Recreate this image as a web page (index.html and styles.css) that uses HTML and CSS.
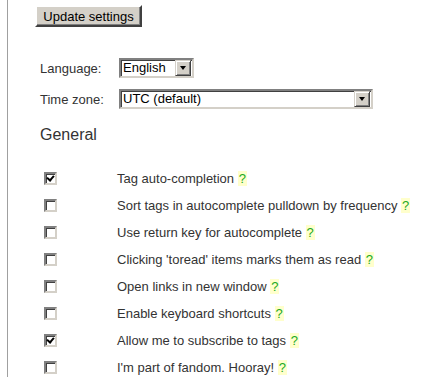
FILE: index.html
```html
<!DOCTYPE html>
<html>
<head>
<meta charset="utf-8">
<link rel="stylesheet" href="styles.css">
</head>
<body>
<div class="page">
  <div class="content">
    <button class="btn">Update settings</button>
    <div class="fields">
      <div class="field">
        <span class="lbl">Language:</span>
        <div class="select lang"><span class="val">English</span><span class="arrow"></span></div>
      </div>
      <div class="field">
        <span class="lbl">Time zone:</span>
        <div class="select tz"><span class="val">UTC (default)</span><span class="arrow"></span></div>
      </div>
    </div>
    <h2 class="section">General</h2>
    <ul class="opts">
      <li><span class="cb checked"></span><span class="text">Tag auto-completion <span class="help">?</span></span></li>
      <li><span class="cb"></span><span class="text">Sort tags in autocomplete pulldown by frequency <span class="help">?</span></span></li>
      <li><span class="cb"></span><span class="text">Use return key for autocomplete <span class="help">?</span></span></li>
      <li><span class="cb"></span><span class="text">Clicking 'toread' items marks them as read <span class="help">?</span></span></li>
      <li><span class="cb"></span><span class="text">Open links in new window <span class="help">?</span></span></li>
      <li><span class="cb"></span><span class="text">Enable keyboard shortcuts <span class="help">?</span></span></li>
      <li><span class="cb checked"></span><span class="text">Allow me to subscribe to tags <span class="help">?</span></span></li>
      <li><span class="cb"></span><span class="text">I'm part of fandom. Hooray! <span class="help">?</span></span></li>
    </ul>
  </div>
</div>
</body>
</html>
```

FILE: styles.css
```css
html, body {
  margin: 0;
  padding: 0;
  background: #fff;
  height: 100%;
  overflow: hidden;
}
body {
  font-family: "Liberation Sans", Arial, sans-serif;
  font-size: 13px;
  color: #333;
}
.page {
  margin-left: 7px;
  border-left: 1px solid #a0a0a0;
  min-height: 100%;
}
.content {
  padding: 5px 0 0 27px;
}
.btn {
  display: block;
  font-family: "Liberation Sans", Arial, sans-serif;
  font-size: 13px;
  color: #000;
  background: #d4d0c8;
  height: 22px;
  width: 107px;
  padding: 0;
  margin: 0;
  border: 2px solid;
  border-color: #fff #404040 #404040 #fff;
  box-shadow: inset -1px -1px 0 #808080, inset 1px 1px 0 #d4d0c8;
}
.fields {
  margin-top: 31px;
  display: flex;
  flex-direction: column;
  gap: 11px;
  padding-left: 5px;
}
.field {
  display: flex;
  align-items: center;
  height: 20px;
}
.lbl {
  width: 79px;
}
.select {
  display: flex;
  align-items: center;
  height: 20px;
  box-sizing: border-box;
  border: 2px solid;
  border-color: #808080 #d4d0c8 #d4d0c8 #808080;
  box-shadow: inset 1px 1px 0 #404040, inset -1px -1px 0 #fff;
  background: #fff;
  color: #000;
  padding: 0 1px 0 2px;
}
.select.lang { width: 75px; }
.select.tz { width: 254px; }
.val {
  flex: 1;
  line-height: 14px;
}
.arrow {
  width: 16px;
  height: 16px;
  box-sizing: border-box;
  background: #d4d0c8;
  border: 1px solid;
  border-color: #d4d0c8 #404040 #404040 #d4d0c8;
  box-shadow: inset 1px 1px 0 #fff, inset -1px -1px 0 #808080;
  position: relative;
}
.arrow::after {
  content: "";
  position: absolute;
  left: 4px;
  top: 5px;
  border-left: 3.5px solid transparent;
  border-right: 3.5px solid transparent;
  border-top: 4px solid #000;
}
.section {
  font-size: 16px;
  font-weight: normal;
  color: #333;
  margin: 16px 0 0 5px;
  line-height: 19px;
}
.opts {
  list-style: none;
  margin: 21px 0 0 0;
  padding: 0;
}
.opts li {
  display: flex;
  align-items: center;
  height: 27px;
}
.cb {
  width: 13px;
  height: 13px;
  box-sizing: border-box;
  margin-left: 9px;
  margin-right: 60px;
  border: 2px solid;
  border-color: #808080 #d4d0c8 #d4d0c8 #808080;
  box-shadow: inset 1px 1px 0 #404040, inset -1px -1px 0 #fff;
  background: #fff;
  position: relative;
}
.cb.checked::after {
  content: "";
  position: absolute;
  left: 2px;
  top: 0px;
  width: 3px;
  height: 5px;
  border: solid #000;
  border-width: 0 2px 2px 0;
  transform: rotate(40deg);
}
.text {
  white-space: nowrap;
}
.help {
  display: inline-block;
  background: #ffffcc;
  color: #22aa22;
  padding: 0 1px;
  line-height: 15px;
}
```
